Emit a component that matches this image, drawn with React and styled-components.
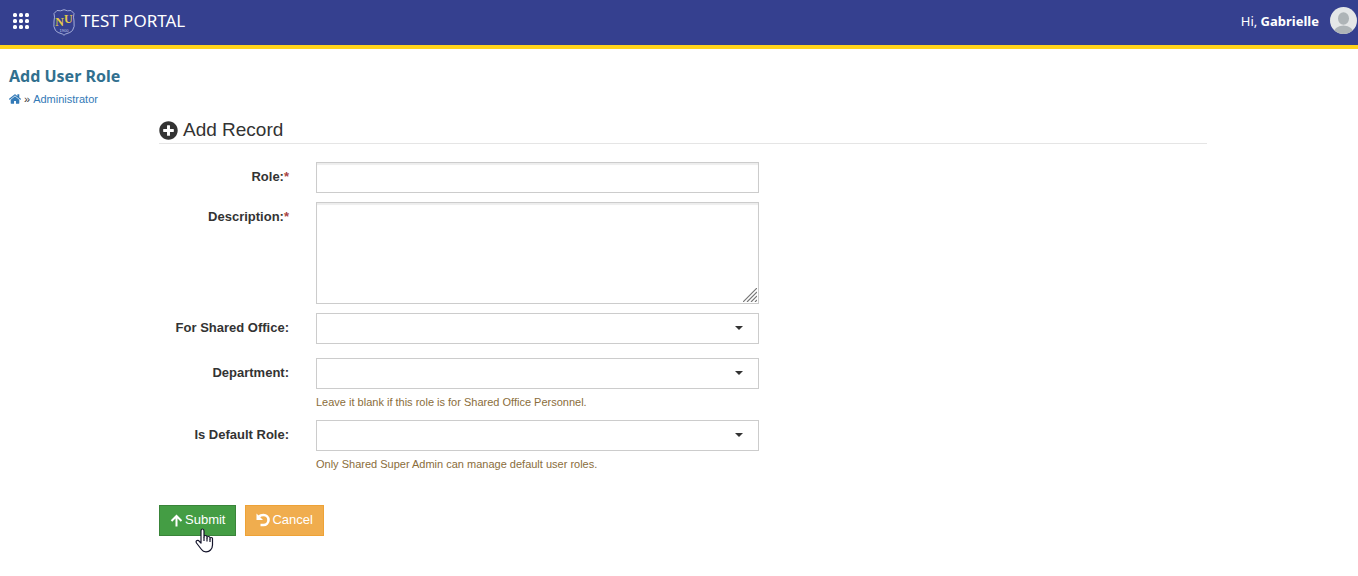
import React, { useState } from "react";
import styled, { createGlobalStyle } from "styled-components";
import { FaPlusCircle } from "react-icons/fa";

const GlobalStyle = createGlobalStyle`
  * {
    box-sizing: border-box;
  }

  body {
    margin: 0;
    background: #fff;
    color: #333;
    font-family: "Liberation Sans", Arial, sans-serif;
    font-size: 13px;
    line-height: 18px;
  }
`;

const Header = styled.header`
  display: flex;
  align-items: center;
  justify-content: space-between;
  height: 49px;
  padding: 0 1px 4px 13px;
  background-color: #35408f;
  border-bottom: 4px solid #ffd41c;
  color: white;
  font-family: "Noto Sans", "Open Sans", sans-serif;
`;

const HeaderGroup = styled.div`
  display: flex;
  align-items: center;
  gap: ${(props) => props.$gap};
`;

const MenuButton = styled.button`
  display: flex;
  padding: 0;
  border: none;
  background: none;
  color: white;
  cursor: pointer;
`;

const Brand = styled.a`
  display: flex;
  align-items: center;
  gap: 6px;
  color: white;
  font-size: 17px;
  line-height: 24px;
  text-decoration: none;

  svg {
    margin-top: 4px;
  }
`;

const Greeting = styled.span`
  font-size: 13px;
`;

const PageHead = styled.div`
  padding: 17px 9px 0;
`;

const Title = styled.h1`
  margin: 0;
  color: #31708f;
  font-family: "Noto Sans", "Open Sans", sans-serif;
  font-size: 16px;
  font-weight: 700;
  line-height: 20px;
`;

const Breadcrumb = styled.nav`
  display: flex;
  align-items: center;
  gap: 3px;
  margin-top: 5px;
  font-size: 11px;
  line-height: 16px;

  a {
    display: flex;
    color: #337ab7;
    text-decoration: none;
  }
`;

const Content = styled.main`
  margin: 0 151px 0 159px;
  padding: 12px 0 24px;

  @media (max-width: 768px) {
    margin: 0 15px;
  }
`;

const SectionTitle = styled.h2`
  display: flex;
  align-items: center;
  gap: 5px;
  margin: 0 0 18px;
  padding-bottom: 2px;
  border-bottom: 1px solid #e5e5e5;
  font-size: 19px;
  font-weight: 400;
  line-height: 22px;
`;

const Row = styled.div`
  display: grid;
  grid-template-columns: 130px minmax(0, 443px);
  column-gap: 27px;
  margin-bottom: ${(props) => props.$space || "9px"};
`;

const Label = styled.label`
  padding-top: 6px;
  font-weight: 700;
  text-align: right;
`;

const Required = styled.span`
  color: #a94442;
`;

const Input = styled.input`
  display: block;
  width: 100%;
  height: 31px;
  padding: 5px 10px;
  border: 1px solid #ccc;
  border-radius: 0;
  box-shadow: inset 0 2px 1px rgba(0, 0, 0, 0.07);
  background: white;
  color: #555;
  font: inherit;
`;

const TextAreaBox = styled.div`
  position: relative;
`;

const TextArea = styled(Input)`
  height: 102px;
  resize: vertical;

  &::-webkit-resizer {
    display: none;
  }
`;

const Grip = styled.svg`
  position: absolute;
  right: 2px;
  bottom: 2px;
  pointer-events: none;
`;

const SelectBox = styled.div`
  position: relative;
`;

const Select = styled(Input)`
  appearance: none;
  box-shadow: none;
`;

const Caret = styled.span`
  position: absolute;
  top: 13px;
  right: 16px;
  border-top: 4px solid #333;
  border-right: 4px solid transparent;
  border-left: 4px solid transparent;
  pointer-events: none;
`;

const Help = styled.p`
  margin: 6px 0 0;
  color: #8a6d3b;
  font-size: 11px;
  line-height: 15px;
`;

const Actions = styled.div`
  display: flex;
  gap: 9px;
  margin-top: 33px;
`;

const ButtonBox = styled.div`
  position: relative;
`;

const Button = styled.button`
  display: flex;
  align-items: center;
  justify-content: center;
  gap: 2px;
  height: 31px;
  padding: 0 10px 1px;
  border: 1px solid ${(props) => props.$border};
  border-radius: 0;
  background-color: ${(props) => props.$color};
  color: white;
  font: inherit;
  cursor: pointer;
`;

const Pointer = styled.svg`
  position: absolute;
  top: 23px;
  left: 36px;
  pointer-events: none;
`;

const options = ["", "Yes", "No"];
const departments = ["", "Registrar", "Accounting", "Library"];

function HomeIcon() {
  return (
    <svg width="12" height="12" viewBox="90 128 1612 1536" fill="currentColor">
      <path d="M1472 992v480q0 26-19 45t-45 19h-384v-384h-256v384h-384q-26 0-45-19t-19-45v-480q0-1 .5-3t.5-3l575-474 575 474q1 2 1 6zm223-69l-62 74q-8 9-21 11h-3q-13 0-21-7l-692-577-692 577q-12 8-24 7-13-2-21-11l-62-74q-8-10-7-23.5t11-21.5l719-599q32-26 76-26t76 26l244 204v-195q0-14 9-23t23-9h192q14 0 23 9t9 23v408l219 182q10 8 11 21.5t-7 23.5z" />
    </svg>
  );
}

function ArrowUpIcon() {
  return (
    <svg
      width="13"
      height="13"
      viewBox="0 0 13 13"
      fill="none"
      stroke="currentColor"
      strokeWidth="2"
    >
      <path d="M6.5 12.5V2M1.5 7L6.5 2L11.5 7" />
    </svg>
  );
}

function GridIcon() {
  const dots = [2, 8, 14];
  return (
    <svg width="16" height="16" viewBox="0 0 16 16" fill="currentColor">
      {dots.map((y) =>
        dots.map((x) => (
          <rect key={`${x}-${y}`} x={x - 2} y={y - 2} width="4" height="4" rx="1.6" />
        ))
      )}
    </svg>
  );
}

function UndoIcon() {
  return (
    <svg width="14" height="14" viewBox="0 0 14 14" fill="none">
      <path
        d="M3 3.5Q4.500 2 7.500 2A5 5 0 0 1 7.500 12H4.500"
        stroke="currentColor"
        strokeWidth="2.6"
      />
      <path d="M.5 .5V7H7Z" fill="currentColor" />
    </svg>
  );
}

function Crest() {
  return (
    <svg width="22" height="27" viewBox="0 0 22 27" fill="none">
      <path
        d="M4 1.5Q7.5 2.5 11 .7Q14.5 2.5 18 1.5L21 4.5Q20 8 21 12Q22 18 19.5 21.5Q17 24 14 24.5Q12 25 11 26.3Q10 25 8 24.5Q5 24 2.5 21.5Q0 18 1 12Q2 8 1 4.5Z"
        stroke="#a5add9"
      />
      <text
        x="11"
        y="17"
        fill="#e3c84a"
        fontFamily="Liberation Serif, serif"
        fontSize="12"
        fontWeight="700"
        textAnchor="middle"
      >
        N<tspan dy="-3">U</tspan>
      </text>
      <text
        x="11"
        y="23"
        fill="#c5cbe8"
        fontFamily="Liberation Sans, sans-serif"
        fontSize="4"
        textAnchor="middle"
      >
        1900
      </text>
    </svg>
  );
}

function Avatar() {
  return (
    <svg width="27" height="27" viewBox="0 0 27 27">
      <clipPath id="avatar">
        <circle cx="13.5" cy="13.5" r="13.5" />
      </clipPath>
      <g clipPath="url(#avatar)">
        <rect width="27" height="27" fill="#e4e6e7" />
        <ellipse cx="13.5" cy="11.5" rx="5.5" ry="6.2" fill="#aeb4b7" />
        <path d="M3 27Q4 19 13.5 18.5Q23 19 24 27Z" fill="#aeb4b7" />
      </g>
    </svg>
  );
}

function HandPointer() {
  return (
    <Pointer width="19" height="25" viewBox="0 0 19 25">
      <path
        d="M6 15V3Q6 1 7.5 1T9 3V9Q9 7.5 10.5 7.5T12 9V10Q12 8.5 13.5 8.5T15 10V11Q15 9.5 16.3 9.5T17.5 11V17Q17.5 20 15.5 22Q14 23.8 11 23.8T6.5 21.5L1.5 15Q.5 13 2 12.5T4.5 13.5Z"
        fill="white"
        stroke="#14142b"
        strokeWidth="1.2"
        strokeLinejoin="round"
      />
      <path d="M9 9V13M12 10V13.5M15 11V14" stroke="#14142b" strokeWidth="1.2" />
    </Pointer>
  );
}

function SelectField({ id, label, value, onChange, items, help, space }) {
  return (
    <Row $space={space}>
      <Label htmlFor={id}>{label}</Label>
      <div>
        <SelectBox>
          <Select as="select" id={id} value={value} onChange={onChange}>
            {items.map((item) => (
              <option key={item} value={item}>
                {item}
              </option>
            ))}
          </Select>
          <Caret />
        </SelectBox>
        {help && <Help>{help}</Help>}
      </div>
    </Row>
  );
}

export default function App() {
  const [record, setRecord] = useState({
    role: "",
    description: "",
    sharedOffice: "",
    department: "",
    defaultRole: "",
  });

  const update = (field) => (e) =>
    setRecord({ ...record, [field]: e.target.value });

  return (
    <>
      <GlobalStyle />
      <Header>
        <HeaderGroup $gap="24px">
          <MenuButton aria-label="Menu">
            <GridIcon />
          </MenuButton>
          <Brand href="#">
            <Crest />
            TEST PORTAL
          </Brand>
        </HeaderGroup>
        <HeaderGroup $gap="11px">
          <Greeting>
            Hi, <b>Gabrielle</b>
          </Greeting>
          <Avatar />
        </HeaderGroup>
      </Header>
      <PageHead>
        <Title>Add User Role</Title>
        <Breadcrumb>
          <a href="#" aria-label="Home">
            <HomeIcon />
          </a>
          <span>»</span>
          <a href="#">Administrator</a>
        </Breadcrumb>
      </PageHead>
      <Content>
        <SectionTitle>
          <FaPlusCircle size={19} />
          Add Record
        </SectionTitle>
        <form onSubmit={(e) => e.preventDefault()}>
          <Row>
            <Label htmlFor="role">
              Role:<Required>*</Required>
            </Label>
            <Input id="role" value={record.role} onChange={update("role")} />
          </Row>
          <Row>
            <Label htmlFor="description">
              Description:<Required>*</Required>
            </Label>
            <TextAreaBox>
              <TextArea
                as="textarea"
                id="description"
                value={record.description}
                onChange={update("description")}
              />
              <Grip width="14" height="14" viewBox="0 0 14 14">
                <path
                  d="M0 14L14 0M4 14L14 4M8 14L14 8M12 14L14 12"
                  stroke="#777"
                  strokeWidth="1.2"
                />
              </Grip>
            </TextAreaBox>
          </Row>
          <SelectField
            id="sharedOffice"
            label="For Shared Office:"
            value={record.sharedOffice}
            onChange={update("sharedOffice")}
            items={options}
            space="14px"
          />
          <SelectField
            id="department"
            label="Department:"
            value={record.department}
            onChange={update("department")}
            items={departments}
            help="Leave it blank if this role is for Shared Office Personnel."
            space="10px"
          />
          <SelectField
            id="defaultRole"
            label="Is Default Role:"
            value={record.defaultRole}
            onChange={update("defaultRole")}
            items={options}
            help="Only Shared Super Admin can manage default user roles."
          />
          <Actions>
            <ButtonBox>
              <Button type="submit" $color="#449d44" $border="#398439">
                <ArrowUpIcon />
                Submit
              </Button>
              <HandPointer />
            </ButtonBox>
            <Button type="button" $color="#f0ad4e" $border="#eea236">
              <UndoIcon />
              Cancel
            </Button>
          </Actions>
        </form>
      </Content>
    </>
  );
}
